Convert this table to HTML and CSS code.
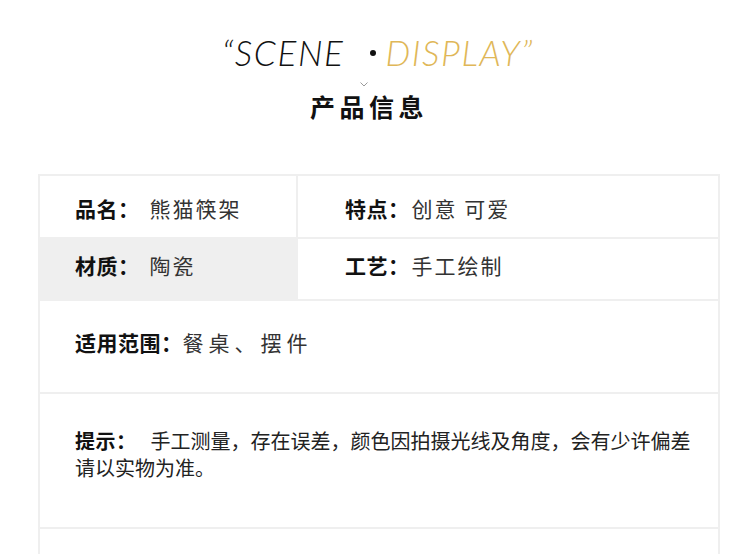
FILE: index.html
```html
<!DOCTYPE html>
<html lang="zh">
<head>
<meta charset="utf-8">
<link rel="stylesheet" href="styles.css">
</head>
<body>
<header class="head">
  <div class="en"><span class="dark">“SCENE</span><span class="dot"></span><span class="gold">DISPLAY”</span></div>
  <svg class="chev" width="8" height="5" viewBox="0 0 8 5"><path d="M0.5 0.5 L4 4 L7.5 0.5" fill="none" stroke="#9a9a9a" stroke-width="1"/></svg>
  <h1 class="cn">产品信息</h1>
</header>
<section class="table">
  <div class="row r1">
    <div class="cell left"><b class="lab">品名：</b><span class="val">熊猫筷架</span></div>
    <div class="cell right"><b class="lab">特点：</b><span class="val v2">创意 可爱</span></div>
  </div>
  <div class="row r2">
    <div class="cell left grey"><b class="lab">材质：</b><span class="val">陶瓷</span></div>
    <div class="cell right"><b class="lab">工艺：</b><span class="val v2">手工绘制</span></div>
  </div>
  <div class="row r3">
    <div class="cell full"><b class="lab">适用范围：</b><span class="val wide">餐桌、摆件</span></div>
  </div>
  <div class="row r4">
    <p class="tip"><b class="lab">提示：</b><span class="tipv">手工测量，存在误差，颜色因拍摄光线及角度，会有少许偏差<br>请以实物为准。</span></p>
  </div>
  <div class="row r5"></div>
</section>
</body>
</html>
```
FILE: styles.css
```css
* { box-sizing: border-box; }
html, body { margin: 0; padding: 0; background: #fff; }
body { width: 750px; height: 554px; overflow: hidden; font-family: "Noto Sans CJK SC", "Noto Sans", sans-serif; color: #111; }

.head { display: flex; flex-direction: column; align-items: center; padding-top: 31px; }
.en { display: flex; align-items: center; font-family: Lato, "Open Sans", sans-serif; font-style: italic; font-weight: 300; font-size: 35px; line-height: 42px; letter-spacing: 1.6px; padding-left: 6px; }
.dark { color: #111; }
.gold { color: #e0b758; }
.dot { display: block; width: 6px; height: 6px; border-radius: 50%; background: #111; margin: 2px 10px 0 25px; }
.chev { display: block; margin: 9px 0 0 -22px; }
.cn { margin: 2px 0 0 -12px; font-size: 25px; font-weight: 700; letter-spacing: 4.5px; line-height: 34px; color: #111; }

.table { margin: 51px 30px 0 38px; border: 2px solid #efefef; border-bottom: none; }
.row { display: flex; border-bottom: 2px solid #efefef; }
.r1 { height: 63px; }
.r2 { height: 62px; }
.r3 { height: 93px; }
.r4 { height: 135px; }
.r5 { height: 40px; }
.cell { display: flex; align-items: center; }
.left { width: 258px; border-right: 2px solid #efefef; padding-left: 35px; }
.r1 .cell { padding-top: 2px; }
.r2 .cell { padding-bottom: 8px; }
.grey { background: #efefef; }
.right { flex: 1; padding-left: 47px; }
.full { flex: 1; padding-left: 35px; padding-bottom: 10px; }
.lab { font-size: 21px; font-weight: 700; color: #111; letter-spacing: 0.5px; }
.val { font-size: 21px; font-weight: 400; color: #333; margin-left: 10px; letter-spacing: 2px; }
.v2 { margin-left: 2px; }
.wide { letter-spacing: 5px; font-size: 21px; margin-left: 0; }
.tip { margin: 0; padding: 33px 20px 0 35px; font-size: 20px; line-height: 27px; color: #222; white-space: nowrap; }
.tip .lab { font-size: 20px; margin-right: 14px; }
.tipv { color: #222; }
```
